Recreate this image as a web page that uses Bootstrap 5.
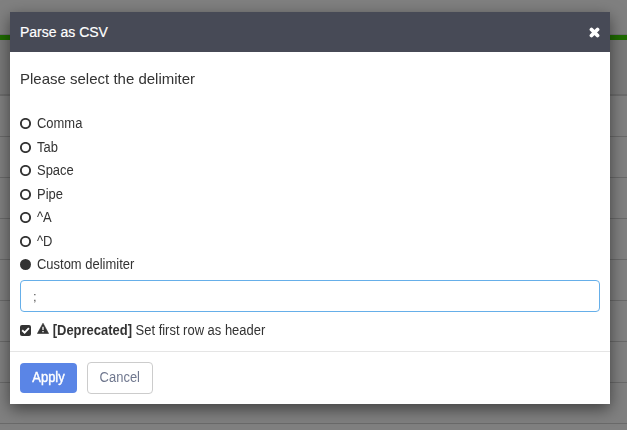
<!DOCTYPE html>
<html lang="en">
<head>
<meta charset="utf-8">
<title>Parse as CSV</title>
<link href="https://cdn.jsdelivr.net/npm/bootstrap@5.3.0/dist/css/bootstrap.min.css" rel="stylesheet">
<style>
body{background:#808080;font-family:"Liberation Sans",Arial,sans-serif;font-size:13px;line-height:20px;color:#333;height:430px;overflow:hidden}
.page-top{height:35px;border-bottom:1px solid #717176}
.page-accent{height:5px;background:#1f6b00}
.page-head{height:56px;background:#797979;border-bottom:2px solid #6c6c6c}
.page-row{height:41px;border-bottom:1px solid #6a6a6a}
.csv-dialog{width:600px;height:392px;margin:12px 0 0 10px;max-width:none}
.csv-dialog .modal-content{height:392px;border:0;border-radius:0;box-shadow:0 5px 15px rgba(0,0,0,.5);color:#333}
.csv-dialog .modal-header{height:40px;background:#474a56;color:#fff;border:0;border-radius:0;padding:0 10px}
.csv-title{font-size:14px;line-height:20px;font-weight:400;-webkit-text-stroke:.2px #fff}
.x-btn{width:11px;height:20px}
.csv-dialog .modal-body{padding:17px 10px 0}
.prompt{font-size:15px;line-height:20px;margin-bottom:23px}
.choice{height:23.5px;line-height:23.5px;gap:5.5px}
.choice svg,.header-row svg{flex:none}
/* slightly condensed 14px text */
.slim{display:inline-block;font-size:14px;transform:scaleX(.926);transform-origin:0 50%}
.btn .slim{transform-origin:50% 50%;padding-bottom:2px}
.header-row .slim{padding-bottom:2px}
.delim{height:32px;border:1px solid #66afe9;border-radius:4px;padding:1px 12px 0;font-size:13px;color:#555;margin-top:3px}
.header-row{height:20px;margin-top:9px;white-space:pre}
.warn{margin:0 0 4px 6px}
.csv-dialog .modal-footer{height:53px;border-top:1px solid #e5e5e5;padding:0 10px;gap:10px}
.csv-dialog .modal-footer>*{margin:0}
.btn-a,.btn-c{display:flex;align-items:center;justify-content:center;line-height:20px}
.btn-a{width:57px;height:30px;padding:0;background:#5a85e6;color:#fff;border:0;border-radius:4px;-webkit-text-stroke:.4px #fff}
.btn-c{width:66px;height:32px;padding:0;background:#fff;color:#70788f;border:1px solid #ccc;border-radius:4px}
</style>
<script src="https://cdn.jsdelivr.net/npm/bootstrap@5.3.0/dist/js/bootstrap.bundle.min.js"></script>
</head>
<body>
<div class="page-top"></div><div class="page-accent"></div><div class="page-head"></div>
<div class="page-row"></div><div class="page-row"></div><div class="page-row"></div><div class="page-row"></div>
<div class="page-row"></div><div class="page-row"></div><div class="page-row"></div><div class="page-row"></div>
<div class="modal d-block overflow-hidden" role="dialog" aria-label="Parse as CSV">
<div class="modal-dialog csv-dialog">
<div class="modal-content">
<div class="modal-header d-flex align-items-center justify-content-between">
<div class="csv-title">Parse as CSV</div>
<button class="x-btn btn p-0 border-0 d-flex align-items-center" aria-label="Close"><svg width="11" height="11" viewBox="0 0 11 11"><path d="M2.5 2.5 8.5 8.5M8.5 2.5 2.5 8.5" stroke="#fff" stroke-width="3.8" stroke-linecap="round"/></svg></button>
</div>
<div class="modal-body">
<div class="prompt">Please select the delimiter</div>
<div class="choice d-flex align-items-center"><svg width="11" height="11"><circle cx="5.5" cy="5.5" r="4.6" fill="none" stroke="#333" stroke-width="1.9"/></svg><span class="slim">Comma</span></div>
<div class="choice d-flex align-items-center"><svg width="11" height="11"><circle cx="5.5" cy="5.5" r="4.6" fill="none" stroke="#333" stroke-width="1.9"/></svg><span class="slim">Tab</span></div>
<div class="choice d-flex align-items-center"><svg width="11" height="11"><circle cx="5.5" cy="5.5" r="4.6" fill="none" stroke="#333" stroke-width="1.9"/></svg><span class="slim">Space</span></div>
<div class="choice d-flex align-items-center"><svg width="11" height="11"><circle cx="5.5" cy="5.5" r="4.6" fill="none" stroke="#333" stroke-width="1.9"/></svg><span class="slim">Pipe</span></div>
<div class="choice d-flex align-items-center"><svg width="11" height="11"><circle cx="5.5" cy="5.5" r="4.6" fill="none" stroke="#333" stroke-width="1.9"/></svg><span class="slim">^A</span></div>
<div class="choice d-flex align-items-center"><svg width="11" height="11"><circle cx="5.5" cy="5.5" r="4.6" fill="none" stroke="#333" stroke-width="1.9"/></svg><span class="slim">^D</span></div>
<div class="choice d-flex align-items-center"><svg width="11" height="11"><circle cx="5.5" cy="5.5" r="5.5" fill="#333"/></svg><span class="slim">Custom delimiter</span></div>
<input class="delim form-control shadow-none" value=";" aria-label="Custom delimiter">
<div class="header-row d-flex align-items-center"><svg width="11" height="11" viewBox="0 0 11 11"><rect width="11" height="11" rx="2" fill="#333"/><path d="M2.2 5.3 4.6 7.6 8.9 3.2" fill="none" stroke="#fff" stroke-width="1.9"/></svg><svg class="warn" width="12" height="11" viewBox="0 0 12 11"><path d="M6 .2 11.6 10.5H.4Z" fill="#333" stroke="#333" stroke-width=".6" stroke-linejoin="round"/><path d="M6 3.7V6.9M6 7.9V9.3" stroke="#fff" stroke-width="1.3"/></svg><span class="slim ps-1"><b>[Deprecated]</b> Set first row as header</span></div>
</div>
<div class="modal-footer d-flex justify-content-start align-items-center">
<button class="btn btn-primary btn-a"><span class="slim">Apply</span></button><button class="btn btn-outline-secondary btn-c"><span class="slim">Cancel</span></button>
</div>
</div>
</div>
</div>
</body>
</html>
